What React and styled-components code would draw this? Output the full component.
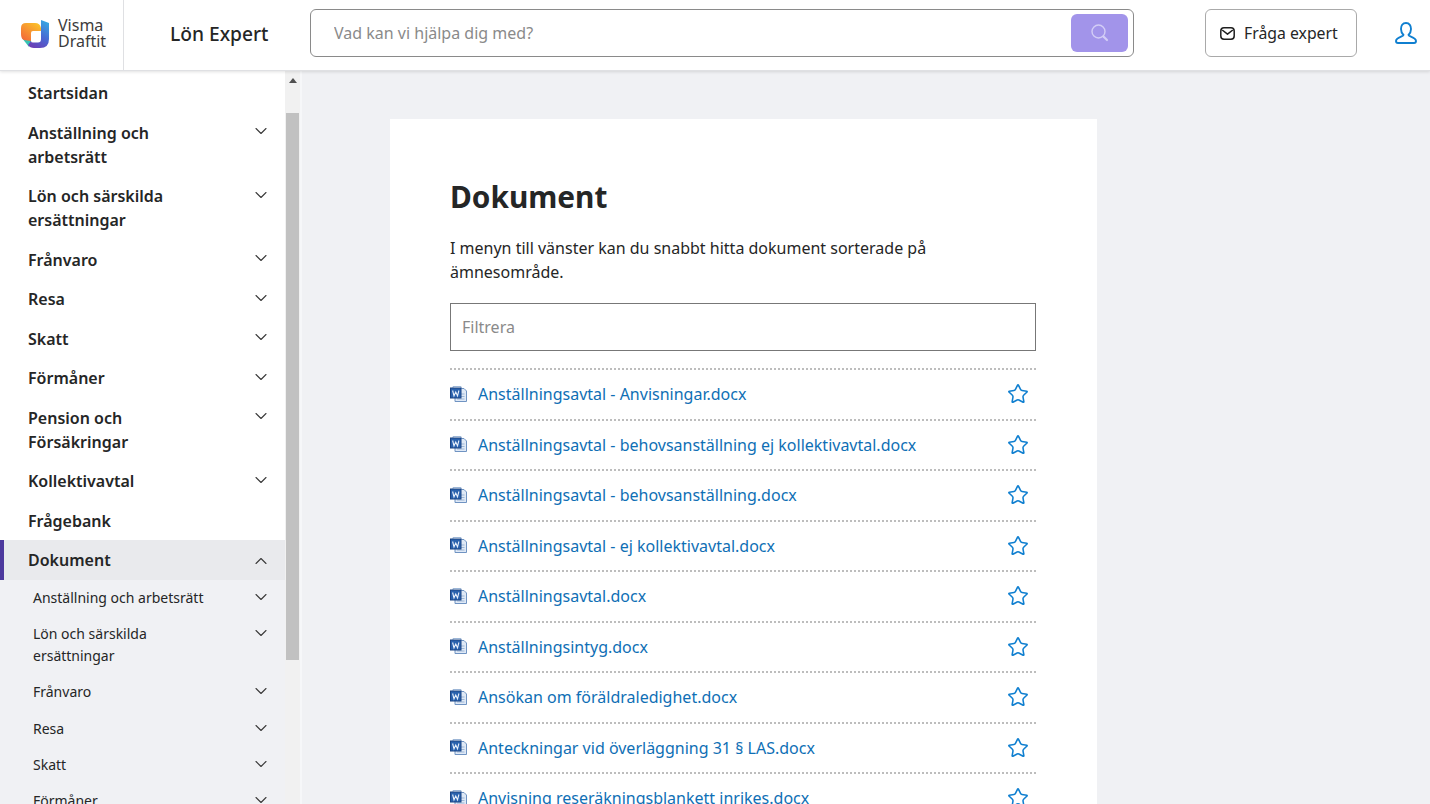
import React from "react";
import styled, { createGlobalStyle } from "styled-components";
import { ChevronDown, ChevronUp, Star } from "lucide-react";

const navItems = [
  { label: "Startsidan" },
  { label: "Anställning och arbetsrätt", arrow: true },
  { label: "Lön och särskilda ersättningar", arrow: true },
  { label: "Frånvaro", arrow: true },
  { label: "Resa", arrow: true },
  { label: "Skatt", arrow: true },
  { label: "Förmåner", arrow: true },
  { label: "Pension och Försäkringar", arrow: true },
  { label: "Kollektivavtal", arrow: true },
  { label: "Frågebank" },
];

const subItems = [
  "Anställning och arbetsrätt",
  "Lön och särskilda ersättningar",
  "Frånvaro",
  "Resa",
  "Skatt",
  "Förmåner",
];

const documents = [
  "Anställningsavtal - Anvisningar.docx",
  "Anställningsavtal - behovsanställning ej kollektivavtal.docx",
  "Anställningsavtal - behovsanställning.docx",
  "Anställningsavtal - ej kollektivavtal.docx",
  "Anställningsavtal.docx",
  "Anställningsintyg.docx",
  "Ansökan om föräldraledighet.docx",
  "Anteckningar vid överläggning 31 § LAS.docx",
  "Anvisning reseräkningsblankett inrikes.docx",
];

const Logo = () => (
  <svg width="29" height="29" viewBox="0 0 29 29">
    <defs>
      <linearGradient id="logoWarm" x1="0.8" y1="0" x2="0" y2="1">
        <stop offset="0" stopColor="#fbc02a" />
        <stop offset="1" stopColor="#f2603a" />
      </linearGradient>
      <linearGradient id="logoCool" x1="0.8" y1="0" x2="0.3" y2="1">
        <stop offset="0" stopColor="#36a9e2" />
        <stop offset="0.55" stopColor="#4a66d2" />
        <stop offset="1" stopColor="#6b3fb6" />
      </linearGradient>
    </defs>
    <path d="M1 19 L10 20 V24 L8 28 Z" fill="#35c3b4" />
    <path d="M0 9 Q0 4 5 4 H14 Q19 4 20 9 V12 H12 Q10 12 10 14 V22 L3 21 Q0 20 0 15 Z" fill="url(#logoWarm)" />
    <path d="M20 1 L28 4 V20 Q28 29 19 29 H13 Q9 29 7 26 L10 22 Q10 23.5 12 23.5 H17 Q20 23.5 20 20 Z" fill="url(#logoCool)" />
  </svg>
);

const SearchIcon = () => (
  <svg width="20" height="20" viewBox="0 0 20 20" fill="none">
    <circle cx="8.5" cy="8.5" r="6.5" stroke="#d3cdf6" strokeWidth="1.4" />
    <path d="M13.5 13.5 L17 17" stroke="#d3cdf6" strokeWidth="2.2" strokeLinecap="round" />
  </svg>
);

const MailIcon = () => (
  <svg width="15" height="13" viewBox="0 0 15 13" fill="none" stroke="#1f1f1f" strokeWidth="1.5">
    <rect x="0.8" y="0.8" width="13.4" height="11.4" rx="3.2" />
    <path d="M2.2 3 L7.5 7.2 L12.8 3" strokeLinejoin="round" />
  </svg>
);

const UserIcon = () => (
  <svg width="24" height="24" viewBox="0 0 24 24" fill="none" stroke="#0f7fd0" strokeWidth="1.9">
    <path d="M12 2 C8.5 2 7 5 7 8 C7 10.5 8 12.5 9.5 14 C9.5 15.5 2 16 2 20 C2 21.5 3 22 4 22 H20 C21 22 22 21.5 22 20 C22 16 14.5 15.5 14.5 14 C16 12.5 17 10.5 17 8 C17 5 15.5 2 12 2 Z" />
  </svg>
);

const WordIcon = () => (
  <svg width="18" height="17" viewBox="0 0 18 17">
    <path d="M5 2.5 H14 L16.5 5 V15.5 H5 Z" fill="#dfe9f6" stroke="#6f93c2" />
    <path d="M11 8 H14.5 M11 10.5 H14.5 M7 13 H14.5" stroke="#9db6d6" />
    <path d="M3 0.5 H11 V3 M3 0.5 V2" fill="none" stroke="#9db6d6" />
    <rect x="0.5" y="2" width="10.5" height="10" fill="#2a62ad" stroke="#1b4484" />
    <path d="M2.6 4.5 L4 9.8 L5.75 6 L7.5 9.8 L8.9 4.5" fill="none" stroke="#e8f0fb" strokeWidth="1.1" />
  </svg>
);

const App = () => {
  return (
    <Page>
      <GlobalStyle />
      <Header>
        <Brand>
          <Logo />
          <BrandName>
            Visma
            <br />
            Draftit
          </BrandName>
        </Brand>
        <Toolbar>
          <ProductName>Lön Expert</ProductName>
          <SearchBox>
            <SearchInput placeholder="Vad kan vi hjälpa dig med?" />
            <SearchButton>
              <SearchIcon />
            </SearchButton>
          </SearchBox>
          <AskButton>
            <MailIcon />
            Fråga expert
          </AskButton>
          <UserLink>
            <UserIcon />
          </UserLink>
        </Toolbar>
      </Header>
      <Body>
        <Sidebar>
          <Nav>
            {navItems.map((item) => (
              <NavRow key={item.label}>
                <NavLabel>{item.label}</NavLabel>
                {item.arrow && <ChevronDown size={20} strokeWidth={1.3} />}
              </NavRow>
            ))}
            <NavRow $active>
              <NavLabel>Dokument</NavLabel>
              <ChevronUp size={20} strokeWidth={1.3} />
            </NavRow>
            <SubNav>
              {subItems.map((label) => (
                <SubRow key={label}>
                  <SubLabel>{label}</SubLabel>
                  <ChevronDown size={20} strokeWidth={1.3} />
                </SubRow>
              ))}
            </SubNav>
          </Nav>
          <ScrollTrack>
            <ScrollArrow />
            <ScrollThumb />
          </ScrollTrack>
        </Sidebar>
        <Main>
          <Card>
            <Title>Dokument</Title>
            <Intro>
              I menyn till vänster kan du snabbt hitta dokument sorterade på ämnesområde.
            </Intro>
            <FilterInput placeholder="Filtrera" />
            <DocList>
              {documents.map((name) => (
                <DocRow key={name}>
                  <WordIcon />
                  <DocLink href="#">{name}</DocLink>
                  <Star size={22} strokeWidth={1.7} color="#0f7fd0" />
                </DocRow>
              ))}
            </DocList>
          </Card>
        </Main>
      </Body>
    </Page>
  );
};

const GlobalStyle = createGlobalStyle`
  html, body {
    margin: 0;
    height: 100%;
    overflow: hidden;
    background: #f0f1f4;
  }
  * {
    box-sizing: border-box;
  }
  body {
    font-family: "Noto Sans", "Open Sans", sans-serif;
    color: #252626;
  }
`;

const Page = styled.div`
  height: 804px;
  display: flex;
  flex-direction: column;
  overflow: hidden;
`;

const Header = styled.header`
  height: 71px;
  flex: none;
  display: flex;
  background: #fff;
  border-bottom: 1px solid #dfe0e3;
  box-shadow: 0 1px 3px rgba(0, 0, 0, 0.12);
  position: relative;
  z-index: 2;
`;

const Brand = styled.div`
  width: 124px;
  flex: none;
  display: flex;
  align-items: center;
  gap: 8px;
  padding: 0 0 4px 21px;
  border-right: 1px solid #dfe0e3;
`;

const BrandName = styled.div`
  font-size: 16px;
  line-height: 16px;
  color: #3c3c3c;
`;

const Toolbar = styled.div`
  flex: 1;
  display: flex;
  align-items: center;
  padding-bottom: 4px;
`;

const ProductName = styled.div`
  width: 186px;
  padding-left: 46px;
  font-size: 19.2px;
  font-weight: 500;
  white-space: nowrap;
`;

const SearchBox = styled.div`
  width: 824px;
  height: 48px;
  display: flex;
  align-items: center;
  justify-content: space-between;
  padding: 0 5px 0 23px;
  border: 1px solid #8a8a8a;
  border-radius: 6px;
`;

const SearchInput = styled.input`
  flex: 1;
  border: 0;
  outline: 0;
  padding: 0;
  font: 400 16px "Noto Sans", sans-serif;
  &::placeholder {
    color: #8a8a8a;
    opacity: 1;
  }
`;

const SearchButton = styled.button`
  width: 57px;
  height: 38px;
  display: flex;
  align-items: center;
  justify-content: center;
  border: 0;
  border-radius: 6px;
  background: #a294ea;
`;

const AskButton = styled.button`
  width: 152px;
  height: 48px;
  margin-left: 71px;
  padding: 0 0 0 14px;
  display: flex;
  align-items: center;
  gap: 9px;
  background: #fff;
  border: 1px solid #a9a9a9;
  border-radius: 6px;
  color: #252626;
  font: 400 15.8px "Noto Sans", sans-serif;
`;

const UserLink = styled.div`
  margin-left: 37px;
  display: flex;
`;

const Body = styled.div`
  flex: 1;
  min-height: 0;
  display: flex;
`;

const Sidebar = styled.aside`
  width: 302px;
  flex: none;
  display: flex;
  background: #fff;
  border-right: 2px solid #f6f7f9;
`;

const Nav = styled.nav`
  width: 285px;
  flex: none;
  padding-top: 2px;
  overflow: hidden;
`;

const NavRow = styled.div`
  min-height: 39.5px;
  display: flex;
  align-items: flex-start;
  justify-content: space-between;
  padding: 8px 14px 7.5px ${(p) => (p.$active ? "24px" : "28px")};
  background: ${(p) => (p.$active ? "#e9eaed" : "transparent")};
  border-left: ${(p) => (p.$active ? "4px solid #4d3a9e" : "0")};
  svg {
    flex: none;
    color: #3a3a3a;
    margin-top: ${(p) => (p.$active ? "3px" : "0.5px")};
  }
`;

const NavLabel = styled.span`
  width: 170px;
  font-size: 16px;
  font-weight: 600;
  line-height: 24px;
`;

const SubNav = styled.div`
  background: #f0f1f4;
`;

const SubRow = styled.div`
  min-height: 36.4px;
  display: flex;
  align-items: flex-start;
  justify-content: space-between;
  padding: 7px 14px 7.4px 33px;
  svg {
    flex: none;
    color: #3a3a3a;
    margin-top: 0;
  }
`;

const SubLabel = styled.span`
  width: 175px;
  font-size: 14px;
  line-height: 22px;
`;

const ScrollTrack = styled.div`
  width: 15px;
  flex: none;
  display: flex;
  flex-direction: column;
  align-items: center;
  background: #f1f1f1;
`;

const ScrollArrow = styled.div`
  margin-top: 7px;
  border-left: 4px solid transparent;
  border-right: 4px solid transparent;
  border-bottom: 5px solid #505050;
`;

const ScrollThumb = styled.div`
  width: 13px;
  height: 547px;
  margin-top: 30px;
  background: #c1c1c1;
`;

const Main = styled.main`
  flex: 1;
  min-width: 0;
  padding: 48px 0 0 88px;
`;

const Card = styled.section`
  width: 707px;
  min-height: 800px;
  padding: 56px 61px 0 60px;
  background: #fff;
`;

const Title = styled.h1`
  margin: 0 0 17px;
  font-size: 29.8px;
  font-weight: 700;
  line-height: 44px;
`;

const Intro = styled.p`
  margin: 0 0 19px;
  font-size: 16px;
  line-height: 24px;
`;

const FilterInput = styled.input`
  display: block;
  width: 100%;
  height: 48px;
  padding: 0 11px;
  border: 1px solid #777;
  border-radius: 0;
  outline: 0;
  font: 400 16px "Noto Sans", sans-serif;
  &::placeholder {
    color: #8a8a8a;
    opacity: 1;
  }
`;

const DocList = styled.div`
  margin-top: 17px;
`;

const DocRow = styled.div`
  height: 50.5px;
  display: flex;
  align-items: center;
  gap: 10px;
  padding-right: 7px;
  border-top: 2px dotted #bdbdbd;
  svg {
    flex: none;
  }
`;

const DocLink = styled.a`
  flex: 1;
  color: #0f6fb5;
  font-size: 16px;
  text-decoration: none;
  white-space: nowrap;
`;

export default App;
